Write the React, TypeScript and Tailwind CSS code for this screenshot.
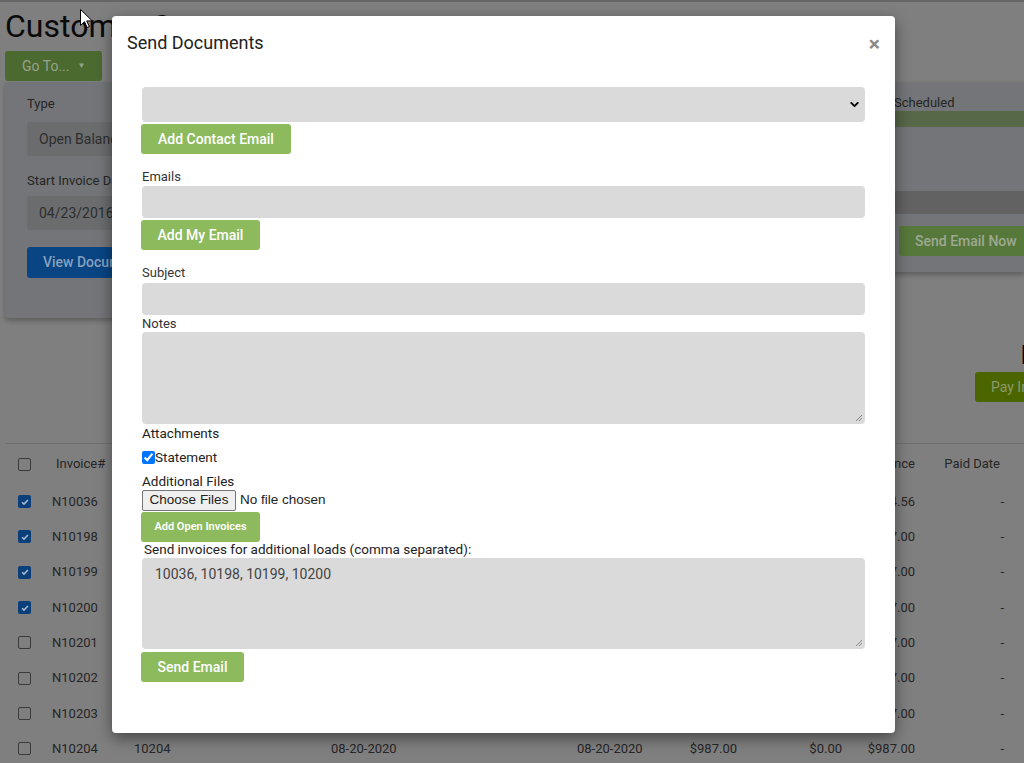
import { ChevronDown } from "lucide-react";

const rows = [
  { inv: "N10036", load: "10036", checked: true, bal: "$1,234.56" },
  { inv: "N10198", load: "10198", checked: true, bal: "$987.00" },
  { inv: "N10199", load: "10199", checked: true, bal: "$987.00" },
  { inv: "N10200", load: "10200", checked: true, bal: "$987.00" },
  { inv: "N10201", load: "10201", checked: false, bal: "$987.00" },
  { inv: "N10202", load: "10202", checked: false, bal: "$987.00" },
  { inv: "N10203", load: "10203", checked: false, bal: "$987.00" },
  { inv: "N10204", load: "10204", checked: false, bal: "$987.00" },
];

function DimCheck({ checked }: { checked: boolean }) {
  if (checked) {
    return (
      <span className="flex h-[13px] w-[13px] items-center justify-center rounded-[2px] bg-[#0b3f7a]">
        <svg viewBox="0 0 12 12" className="h-[10px] w-[10px]">
          <path d="M2.5 6.2l2.3 2.3 4.7-5" fill="none" stroke="#a9bcd2" strokeWidth="1.8" />
        </svg>
      </span>
    );
  }
  return <span className="block h-[13px] w-[13px] rounded-[2px] border border-[#3a3a3a]" />;
}

function GreenButton({ children, className = "" }: { children: React.ReactNode; className?: string }) {
  return (
    <button className={`flex h-[30px] items-center justify-center rounded-[3px] bg-[#8cba5d] font-medium text-white ${className}`}>
      {children}
    </button>
  );
}

const cols = "grid grid-cols-[47px_82px_197px_246px_90px_70px_105px_73px_89px] items-center";

function Background() {
  return (
    <div className="relative h-[763px] w-[1024px] overflow-hidden bg-[#7f7f7f] text-[#262626]">
      <div className="h-[2px] bg-[#666]" />
      <div className="pl-[5px] pt-[6px] text-[32px] leading-[36px] text-[#0a0a0a]">Customer Statements</div>
      <div className="ml-[5px] mt-[7px] flex h-[30px] w-[97px] items-center gap-[8px] rounded-[3px] bg-[#4b6a2f] pl-[17px] text-[14px] text-[#98a28c]">
        Go To...
        <span className="text-[8px]">▼</span>
      </div>

      <div className="mt-[1px] flex items-start">
        <div className="ml-[5px] h-[236px] w-[460px] rounded-b-[4px] bg-[#737578] px-[22px] pt-[14px] shadow-[0_3px_5px_rgba(0,0,0,0.25)]">
          <div className="text-[13px] leading-[16px]">Type</div>
          <div className="mt-[10px] flex h-[34px] items-center rounded-[3px] bg-[#6b6c6e] px-[12px] text-[14px] text-[#2e2e2e]">Open Balance</div>
          <div className="mt-[17px] text-[13px] leading-[16px]">Start Invoice Date</div>
          <div className="mt-[7px] flex h-[34px] items-center rounded-[3px] bg-[#6b6c6e] px-[12px] text-[14px] text-[#2e2e2e]">04/23/2016</div>
          <div className="mt-[17px] flex h-[31px] w-[170px] items-center rounded-[3px] bg-[#084582] px-[16px] text-[14px] font-medium text-[#86a0bf]">View Documents</div>
        </div>
        <div className="ml-auto h-[190px] w-[150px] bg-[#737578] pt-[12px] shadow-[0_3px_5px_rgba(0,0,0,0.25)]">
          <div className="pl-[20px] text-[13px] leading-[17px]">Scheduled</div>
          <div className="h-[16px] bg-[#566848]" />
          <div className="mt-[64px] h-[23px] bg-[#626262]" />
          <div className="ml-[25px] mt-[12px] flex h-[30px] items-center rounded-l-[3px] bg-[#56783a] pl-[16px] text-[14px] font-medium text-[#9ea892]">
            Send Email Now
          </div>
        </div>
      </div>

      <div className="mt-[23px] flex justify-end overflow-hidden">
        <div className="w-[3px] overflow-hidden text-[26px] font-bold leading-[28px] text-black">B</div>
      </div>
      <div className="mt-[3px] flex justify-end">
        <div className="flex h-[30px] w-[49px] items-center overflow-hidden whitespace-nowrap rounded-l-[3px] bg-[#4b6500] pl-[16px] text-[14px] text-[#8b996a]">
          Pay Invoices
        </div>
      </div>

      <div className="ml-[5px] mt-[41px] border-t border-[#707070] text-[13px]">
        <div className={`${cols} h-[40px]`}>
          <div className="pl-[13px]">
            <DimCheck checked={false} />
          </div>
          <div className="pl-[4px]">Invoice#</div>
          <div>Load#</div>
          <div>Invoice Date</div>
          <div>Due Date</div>
          <div className="text-right">Amount</div>
          <div className="text-right">Paid</div>
          <div className="text-right">Balance</div>
          <div className="text-right pr-[4px]">Paid Date</div>
        </div>
        {rows.map((r) => (
          <div key={r.inv} className={`${cols} h-[35.3px]`}>
            <div className="pl-[13px]">
              <DimCheck checked={r.checked} />
            </div>
            <div>{r.inv}</div>
            <div>{r.load}</div>
            <div>08-20-2020</div>
            <div>08-20-2020</div>
            <div className="text-right">$987.00</div>
            <div className="text-right">$0.00</div>
            <div className="text-right">{r.bal}</div>
            <div className="text-right">-</div>
          </div>
        ))}
      </div>

      <svg viewBox="0 0 12 19" className="absolute left-[80px] top-[9px] h-[19px] w-[12px]">
        <path d="M0.5 0.5v16l4-3.8 2.6 5.8 2.2-1-2.6-5.6h5.6z" fill="#fff" stroke="#000" strokeWidth="1" />
      </svg>
    </div>
  );
}

function Label({ children, className = "" }: { children: React.ReactNode; className?: string }) {
  return <div className={`text-[13px] leading-[16px] text-[#333] ${className}`}>{children}</div>;
}

export default function App() {
  return (
    <div className="relative h-[763px] w-[1024px] overflow-hidden font-['Roboto',sans-serif]">
      <Background />

      <div className="absolute left-[112px] top-[16px] h-[717px] w-[783px] rounded-[4px] bg-white shadow-[0_5px_15px_rgba(0,0,0,0.45)]">
        <div className="flex h-[53px] items-center justify-between pl-[15px] pr-[15px]">
          <h4 className="text-[18px] font-normal text-[#222]">Send Documents</h4>
          <span className="mt-[3px] text-[21px] font-bold leading-none text-[#8a8a8a]">×</span>
        </div>

        <div className="px-[30px] pt-[18px]">
          <div className="flex h-[35px] items-center justify-end rounded-[4px] bg-[#dadada] pr-[4px]">
            <ChevronDown className="h-[13px] w-[13px] text-black" strokeWidth={3.5} />
          </div>
          <GreenButton className="-ml-[1px] mt-[2px] w-[150px] text-[14px]">Add Contact Email</GreenButton>

          <Label className="mt-[15px]">Emails</Label>
          <div className="mt-[1px] h-[32px] rounded-[4px] bg-[#dadada]" />
          <GreenButton className="-ml-[1px] mt-[2px] w-[119px] text-[14px]">Add My Email</GreenButton>

          <Label className="mt-[15px]">Subject</Label>
          <div className="mt-[2px] h-[32px] rounded-[4px] bg-[#dadada]" />
          <Label className="mt-[1px]">Notes</Label>
          <div className="relative h-[92px] rounded-[4px] bg-[#dadada]">
            <svg viewBox="0 0 8 8" className="absolute bottom-[2px] right-[2px] h-[8px] w-[8px]">
              <path d="M1 7L7 1M4 7L7 4" stroke="#888" strokeWidth="1" />
            </svg>
          </div>

          <div className="mt-[1px] text-[13.5px] leading-[16px] text-[#222]">Attachments</div>
          <label className="mt-[8px] flex items-center text-[13.5px] leading-[16px] text-[#222]">
            <input type="checkbox" defaultChecked className="m-0 h-[13px] w-[13px] accent-[#0075ff]" />
            Statement
          </label>
          <div className="mt-[8px] text-[13.5px] leading-[16px] text-[#222]">Additional Files</div>
          <div className="mt-[1px] flex items-center font-['Liberation_Sans',sans-serif] text-[13.5px] text-[#222]">
            <span className="flex h-[21px] w-[94px] items-center justify-center rounded-[2px] border border-[#767676] bg-[#efefef]">
              Choose Files
            </span>
            <span className="ml-[4px]">No file chosen</span>
          </div>
          <GreenButton className="-ml-[1px] mt-[1px] w-[119px] text-[11px] font-semibold">Add Open Invoices</GreenButton>
          <div className="ml-[2px] -mt-[1px] text-[13.5px] leading-[16px] text-[#222]">
            Send invoices for additional loads (comma separated):
          </div>
          <div className="relative mt-[1px] h-[91px] rounded-[4px] bg-[#dadada] px-[13px] pt-[8px] text-[14px] leading-[16px] text-[#444]">
            10036, 10198, 10199, 10200
            <svg viewBox="0 0 8 8" className="absolute bottom-[2px] right-[2px] h-[8px] w-[8px]">
              <path d="M1 7L7 1M4 7L7 4" stroke="#888" strokeWidth="1" />
            </svg>
          </div>
          <GreenButton className="-ml-[1px] mt-[3px] w-[103px] text-[14px]">Send Email</GreenButton>
        </div>
      </div>
    </div>
  );
}
